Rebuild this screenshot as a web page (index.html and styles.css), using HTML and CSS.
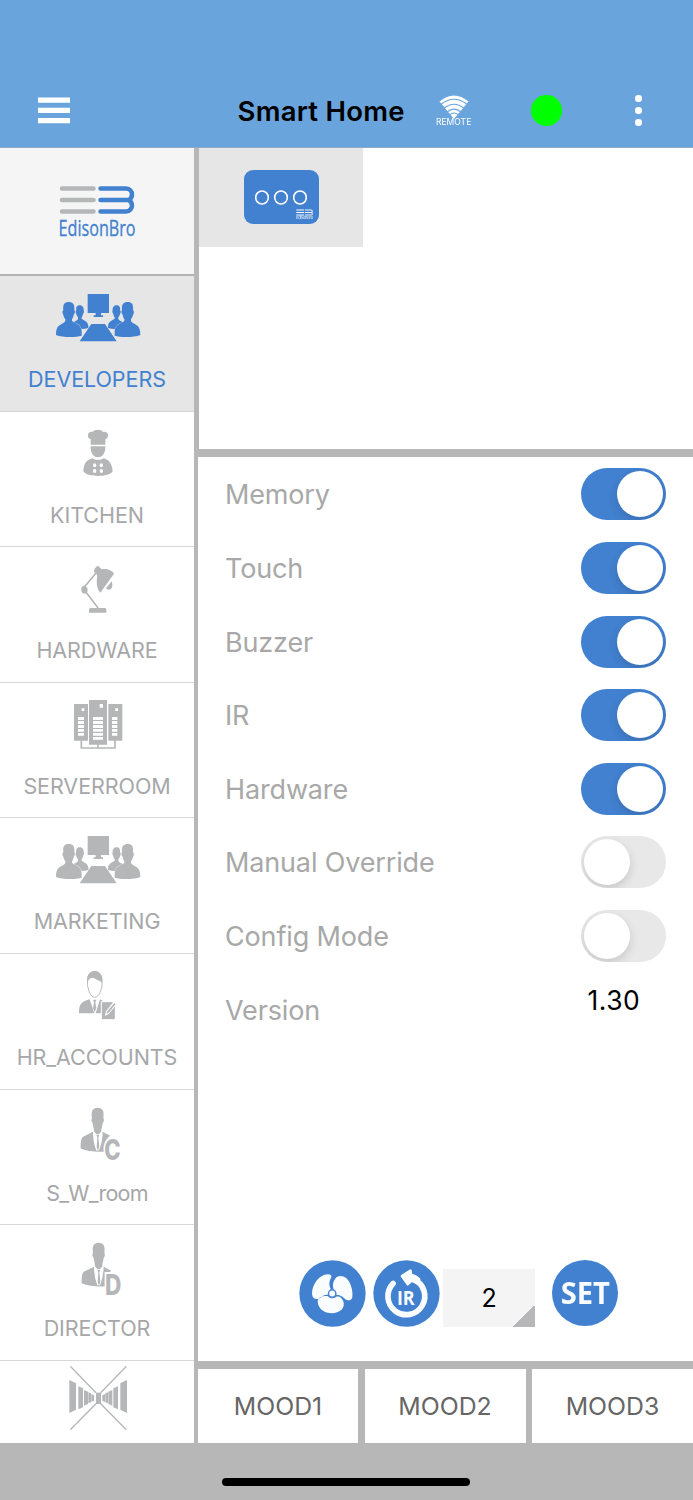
FILE: index.html
```
<!DOCTYPE html>
<html lang="en">
<head>
<meta charset="utf-8">
<title>Smart Home</title>
<link rel="stylesheet" href="styles.css">
</head>
<body>
<svg class="defs" aria-hidden="true">
  <defs>
    <symbol id="team" viewBox="0 12 360 210">
      <path d="M143 42h64v57h-24v7h6v5h-28v-5h6v-7h-24zM154 132h41l35 52H119z"/>
      <g id="pair">
        <path d="M70 90C68 72 74 66 86 66S105 72 103 90C106 93 105 101 101 104C100 111 98 115 96 117V122C102 130 125 131 125 155V167C108 173 67 173 48 165C48 140 56 137 69 130C74 127 76 125 76 121V117C73 114 71 110 70 104C67 101 66 93 70 90Z"/>
        <path d="M109 91C107 81 112 76 119 76S132 81 131 91C133 94 132 99 129 102C128 107 127 110 125 112V116C130 121 143 122 145 137V144C139 146 132 147 125 147C121 136 112 130 101 126C108 122 113 121 114 116V112C111 109 110 106 109 102C106 99 106 94 109 91Z"/>
      </g>
      <use href="#pair" transform="matrix(-1 0 0 1 349 0)"/>
    </symbol>
    <symbol id="brand" viewBox="0 0 76 28">
      <path d="M3 2.500h31.500M3 14h31.500M3 25.500h31.500" class="bars"/>
      <path d="M41.500 2.500H67c4 0 6 3 6 6S71.500 13 69.500 14c2 1 3.500 3 3.500 5.500s-2 6-6 6H41.500M41.500 14h28" class="bee"/>
    </symbol>
  </defs>
</svg>
<header class="topbar">
  <svg class="menu" viewBox="0 0 32 27"><path d="M0 .5h32v5.300H0zM0 10.700h32V16H0zM0 21h32v5.300H0z"/></svg>
  <h1 class="title">Smart Home</h1>
  <div class="remote">
    <svg viewBox="0 0 30 24"><path d="M.5 6.500Q15-5.500 29.500 6.500L15 24z"/><path class="arcs" d="M2 9.200Q15-.8 28 9.200M5 13.200Q15 5.200 25 13.200M8 17Q15 11.200 22 17M10 20.300Q15 15.800 20 20.300"/></svg>
    <span>REMOTE</span>
  </div>
  <div class="status"></div>
  <div class="more"><i></i><i></i><i></i></div>
</header>
<main class="main">
  <nav class="rooms">
    <div class="logo">
      <svg class="logo-mark"><use href="#brand"/></svg>
      <span class="logo-name">EdisonBro</span>
    </div>
    <a class="room active"><svg class="wide"><use href="#team"/></svg><span>DEVELOPERS</span></a>
    <a class="room"><svg viewBox="0 0 240 210"><path d="M92 74V58c-7-3-9-8-8-14 1-7 8-10 14-8 5-9 26-9 31 0 7-2 14 2 15 8 1 7-2 11-8 14v16zM92 79h44c1 19-8 33-22 33S91 98 92 79zM70 154c1-23 9-34 27-39 9 6 25 6 34 0 17 5 25 16 27 39-7 10-24 14-44 14s-37-4-44-14z"/><g class="cut"><ellipse cx="104" cy="136" rx="5" ry="6"/><ellipse cx="124" cy="136" rx="5" ry="6"/><ellipse cx="104" cy="153" rx="5" ry="6"/><ellipse cx="124" cy="153" rx="5" ry="6"/></g></svg><span>KITCHEN</span></a>
    <a class="room"><svg viewBox="0 1 240 210"><path class="line" d="M108 55L74 96M75 108l39 52"/><path d="M102 51C101 44 106 38 114 33L125 44C140 41 156 47 162 57L121 114C111 104 108 84 112 63L109 58zM138 101L155 80C159 90 157 100 152 104C147 107 142 105 138 101zM64 105c-1-7 3-13 9-12s10 6 10 12-4 11-10 12c-6-1-9-6-9-12zM87 174v-8q0-6 5-6h42q5 0 5 6v8z"/></svg><span>HARDWARE</span></a>
    <a class="room"><svg viewBox="0 3 240 210"><path d="M42 42h42v110H42zM145 42h42v110h-42zM87 30h54v134H87z"/><path class="line" d="M64 151v23h101v-23M114 163v11"/><path class="cut" d="M65 55h8v8h-8zM119 42h10v11h-10zM166 55h8v8h-8zM54 81h18v9H54zM54 93h18v9H54zM54 105h18v9H54zM54 117h18v8H54zM54 129h18v8H54zM99 81h30v9H99zM99 93h30v9H99zM99 105h30v9H99zM99 117h30v8H99zM99 129h30v8H99zM99 141h30v8H99zM156 81h16v9h-16zM156 93h16v9h-16zM156 105h16v9h-16zM156 117h16v8h-16zM156 129h16v8h-16z"/></svg><span>SERVERROOM</span></a>
    <a class="room"><svg class="wide"><use href="#team"/></svg><span>MARKETING</span></a>
    <a class="room"><svg viewBox="0 6 240 210"><path class="outline" d="M83 63c-1-18 8-28 21-28s23 10 22 28c1 9 0 18-2 23-3 13-11 26-20 26s-16-13-19-26c-3-9-3-16-2-23z"/><path d="M82 68C79 45 90 33 104 33C119 33 129 45 126 68C121 62 115 63 107 57C100 52 95 52 89 56C85 59 85 63 82 68zM57 160C57 133 62 126 89 118L103 160zM120 118L130 124V160H107zM99 119h10l-3 8 3 18-5 11-5-11 3-18z"/><path class="sheet" d="M124 125h37q5 0 5 6v43q0 5-5 5h-37z"/><path class="cut" d="M134 168l4-14 24-31 9 8-24 30z"/><path d="M139 161l3-7 21-25 4 3-21 26z"/></svg><span>HR_ACCOUNTS</span></a>
    <a class="room"><svg viewBox="0 7.500 240 210"><g id="suit"><path d="M96 68C93 47 98 37 113 37S133 47 130 68C133 71 132 79 128 83C127 93 124 99 124 107V117H102V107C102 99 99 93 98 83C94 79 93 71 96 68Z"/><path d="M62 159C62 139 63 127 71 123L99 109L112 152L114 152L127 109L151 121C138 128 132 146 134 168C109 170 82 167 62 159Z"/><path class="cut" d="M99 111L103 109Q113 124 123 109L128 111Q127 141 117 165H109Q99 140 99 111z"/><path d="M109 118h9l-3 8 3 28-4 12-4-12 2-28z"/></g><text class="letter" x="133" y="193" textLength="49" lengthAdjust="spacingAndGlyphs">C</text></svg><span class="sw">S_W_room</span></a>
    <a class="room"><svg viewBox="0 -6 240 210"><use href="#suit" transform="translate(3 -14)"/><text class="letter" x="135" y="181" textLength="49" lengthAdjust="spacingAndGlyphs">D</text></svg><span>DIRECTOR</span></a>
    <a class="room last"><svg viewBox="30 48 240 210"><path class="thin" d="M61 49l77 79M229 49l-77 79M61 239l77-78M229 239l-77-78"/><path d="M138 128h15v34h-15z"/><path id="shutter" d="M58 90l20 10v79l-20 10zM85 109l14 6v57l-14 6zM102 120l12 5v37l-12 5zM115 127l8 3v27l-8 3zM124 132l8 4v16l-8 4z"/><use href="#shutter" transform="matrix(-1 0 0 1 289 0)"/></svg></a>
  </nav>
  <section class="content">
    <div class="devices">
      <div class="device">
        <div class="switchbox">
          <svg class="buttons" viewBox="0 0 52 15"><ellipse cx="7" cy="7.500" rx="6.300" ry="6.500"/><ellipse cx="26" cy="7.500" rx="6.300" ry="6.500"/><ellipse cx="45" cy="7.500" rx="6.300" ry="6.500"/></svg>
          <div class="mini"><svg><use href="#brand"/></svg><span>EdisonBro</span></div>
        </div>
      </div>
    </div>
    <div class="settings">
      <div class="row"><span>Memory</span><b class="toggle on"></b></div>
      <div class="row"><span>Touch</span><b class="toggle on"></b></div>
      <div class="row"><span>Buzzer</span><b class="toggle on"></b></div>
      <div class="row"><span>IR</span><b class="toggle on"></b></div>
      <div class="row"><span>Hardware</span><b class="toggle on"></b></div>
      <div class="row"><span>Manual Override</span><b class="toggle"></b></div>
      <div class="row"><span>Config Mode</span><b class="toggle"></b></div>
      <div class="row"><span>Version</span><em class="number">1.30</em></div>
      <div class="actions">
        <svg class="round" viewBox="0 0 200 200"><circle class="disc" cx="100" cy="100" r="99"/><path class="white" d="M97 50C98 42 86 40 74 45C52 55 38 80 39 102C41 120 56 119 66 111C73 105 80 103 88 103C86 97 89 90 95 87C88 74 90 64 97 50ZM108 56C115 44 130 46 141 54C155 68 162 92 159 112C155 124 143 122 135 114C128 107 122 105 110 104C113 97 110 90 103 87C100 75 101 66 108 56ZM56 126C54 112 70 106 87 108C92 116 106 116 112 109C124 108 127 114 132 122C140 146 120 159 98 159C76 159 58 146 56 126Z"/><circle class="hub" cx="99" cy="100" r="11"/></svg>
        <svg class="round second" viewBox="0 0 200 200"><circle class="disc" cx="100" cy="100" r="99"/><path class="arrow" d="M60 70A55 55 0 1 0 122 58"/><path class="white head" d="M86 48L112 31L114 44Q128 48 138 57L128 68L115 62L104 73Z"/><text class="irtext" x="98" y="133" text-anchor="middle" textLength="53" lengthAdjust="spacingAndGlyphs">IR</text></svg>
        <div class="select">2</div>
        <div class="set"><span>SET</span></div>
      </div>
    </div>
    <div class="moods"><button>MOOD1</button><button>MOOD2</button><button>MOOD3</button></div>
  </section>
</main>
<footer class="home"><i></i></footer>
</body>
</html>
```
FILE: styles.css
```
* { box-sizing: border-box; }
body { margin: 0; width: 693px; height: 1500px; overflow: hidden; background: #b7b7b7; font-family: Inter, "Liberation Sans", sans-serif; }
.defs { position: absolute; width: 0; height: 0; }
.topbar { height: 148px; background: #6aa4dd; border-bottom: 1px solid #8caac8; display: flex; align-items: flex-start; padding: 94px 0 0 38px; }
.menu { width: 32px; height: 27px; margin-top: 2.700px; fill: #fff; flex: none; }
.title { margin: 0 0 0 167.500px; width: 168.500px; flex: none; font-size: 27.500px; line-height: 34px; font-weight: 600; letter-spacing: .25px; white-space: nowrap; }
.remote { width: 40px; margin: 1px 0 0 28px; text-align: center; color: #fff; display: flex; flex-direction: column; align-items: center; flex: none; }
.remote svg { width: 30px; height: 24px; fill: #fff; }
.remote span { font-size: 9.500px; line-height: 10px; margin-top: -2px; transform: scaleX(.9); }
.remote .arcs { fill: none; stroke: #6aa4dd; stroke-width: 1.100px; }
.status { width: 30.500px; height: 30.500px; margin: 1px 0 0 57px; border-radius: 50%; background: #0f0; flex: none; }
.more { margin: 1px 0 0 73.500px; display: flex; flex-direction: column; gap: 5.500px; }
.more i { width: 6.500px; height: 6.500px; border-radius: 50%; background: #fff; }
.main { height: 1295px; display: flex; }
.rooms { width: 194px; height: 1295px; overflow: hidden; background: #fff; flex: none; }
.logo { height: 128px; background: #f5f5f5; border-bottom: 2px solid #b3b3b3; padding: 38px 0 0 59px; }
.logo-mark { display: block; width: 76px; height: 28px; }
.bars { fill: none; stroke: #b5b6b8; stroke-width: 4.500px; stroke-linecap: round; }
.bee { fill: none; stroke: #4281d0; stroke-width: 4.500px; stroke-linecap: round; stroke-linejoin: round; }
.logo-name { display: block; color: #4281d0; font-family: "Open Sans", sans-serif; font-size: 21px; line-height: 28px; white-space: nowrap; transform: translateX(-.5px) scaleX(.77); transform-origin: 0 0; -webkit-text-stroke: .3px #4281d0; }
.room { display: block; height: 135.600px; border-bottom: 1px solid #d8d8d8; padding-top: 8px; color: #a6a7a9; fill: #b5b6b8; font-size: 21.500px; letter-spacing: -.07px; }
.room svg { display: block; width: 80px; height: 70px; margin-left: 60px; }
.room svg.wide { width: 120px; margin-left: 40px; }
.room span { display: block; text-align: center; line-height: 30px; margin-top: 10px; white-space: nowrap; }
.room .sw { letter-spacing: -.75px; }
.active { background: #e6e6e6; color: #4281d0; fill: #4281d0; }
.room.last { padding-top: 5.500px; border: 0; }
.line { fill: none; stroke: #b5b6b8; stroke-width: 5px; }
.thin { fill: none; stroke: #b5b6b8; stroke-width: 4px; }
.outline { fill: #fff; stroke: #b5b6b8; stroke-width: 3px; }
.sheet { stroke: #fff; stroke-width: 3px; }
.cut { fill: #fff; }
.letter { font: 800 84px Inter, sans-serif; stroke: #fff; stroke-width: 12px; paint-order: stroke; letter-spacing: 0; }
.content { width: 499px; display: flex; flex-direction: column; padding-left: 4px; }
.devices { height: 301px; margin-left: 1px; background: #fff; }
.device { width: 164px; height: 99px; background: #e6e6e6; padding: 22px 0 0 45px; }
.switchbox { width: 75px; height: 54px; border-radius: 9px; background: #4281d0; position: relative; padding: 20px 0 0 11.300px; }
.buttons { display: block; width: 52px; height: 15px; fill: none; stroke: #fff; stroke-width: 1.600px; }
.mini { position: absolute; left: 52px; top: 39px; width: 17px; color: #c9dcf4; filter: brightness(3) grayscale(1); }
.mini svg { display: block; width: 17px; height: 7px; }
.mini span { display: block; font-size: 4px; line-height: 4px; letter-spacing: -.25px; }
.settings { height: 904px; margin-top: 8px; background: #fff; padding: 0 27.500px 0 27px; }
.row { height: 73.670px; display: flex; justify-content: space-between; align-items: flex-start; font-size: 27px; letter-spacing: -.15px; color: #a8a8a8; padding-top: 11.200px; }
.row span { line-height: 54px; white-space: nowrap; }
.toggle { width: 85px; height: 52px; border-radius: 26px; background: #e8e8e8; overflow: hidden; padding: 3px 0 0 3px; }
.toggle::before { content: ""; display: block; width: 46px; height: 46px; border-radius: 50%; background: #fff; box-shadow: 0 4px 10px rgba(0,0,0,.14); }
.toggle.on { background: #4281d0; padding-left: 36.500px; }
.number { font-style: normal; color: #000; width: 78px; font-size: 26.500px; line-height: 33px; letter-spacing: .5px; }
.actions { display: flex; align-items: flex-start; padding: 214px 0 0 74px; }
.round { width: 67px; height: 67px; flex: none; }
.second { margin-left: 7px; }
.disc { fill: #4281d0; }
.white { fill: #fafdff; }
.head { stroke: #fafdff; stroke-width: 7px; stroke-linejoin: round; }
.hub { fill: #f5fbff; stroke: #4281d0; stroke-width: 4px; }
.arrow { fill: none; stroke: #fafdff; stroke-width: 17px; stroke-linecap: round; }
.irtext { font: 700 61px "Open Sans", sans-serif; fill: #fafdff; letter-spacing: 0; }
.select { width: 92px; height: 58px; margin: 9px 0 0 3px; background: linear-gradient(135deg, transparent 50%, #b7b7b9 50%) right bottom / 23px 21px no-repeat #f4f4f4; text-align: center; font-size: 25px; line-height: 59px; flex: none; }
.set { width: 66px; height: 66px; margin-left: 17px; border-radius: 50%; background: #4281d0; color: #fafdff; font: 700 30px/65px "Open Sans", sans-serif; display: flex; justify-content: center; }
.set span { transform: scaleX(.97); }
.moods { display: grid; grid-template-columns: 160px 161px 161px; column-gap: 6.500px; height: 74px; margin-top: 8px; }
.moods button { border: 0; padding: 0; background: #fff; color: #666; font: 400 24.800px Inter, sans-serif; }
.home { height: 57px; padding-top: 35px; }
.home i { display: block; width: 248px; height: 8px; margin-left: 222px; border-radius: 4px; background: #000; }
```
